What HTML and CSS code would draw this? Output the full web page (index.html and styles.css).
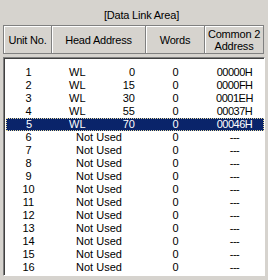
FILE: index.html
```
<!doctype html>
<html>
<head>
<meta charset="utf-8">
<title>Data Link Area</title>
<link rel="stylesheet" href="styles.css">
</head>

<body>
<div class="panel">
	<div class="title">[Data Link Area]</div>
	<div class="head">
		<div class="hc c1">Unit No.</div>
		<div class="hc c2">Head Address</div>
		<div class="hc c3">Words</div>
		<div class="hc c4">Common 2<br>Address</div>
	</div>
	<div class="list">
		<div class="row"><span class="c1">1</span><span class="c2 addr"><i>WL</i><b>0</b></span><span class="c3">0</span><span class="c4">00000H</span></div>
		<div class="row"><span class="c1">2</span><span class="c2 addr"><i>WL</i><b>15</b></span><span class="c3">0</span><span class="c4">0000FH</span></div>
		<div class="row"><span class="c1">3</span><span class="c2 addr"><i>WL</i><b>30</b></span><span class="c3">0</span><span class="c4">0001EH</span></div>
		<div class="row"><span class="c1">4</span><span class="c2 addr"><i>WL</i><b>55</b></span><span class="c3">0</span><span class="c4">00037H</span></div>
		<div class="row sel"><span class="c1">5</span><span class="c2 addr"><i>WL</i><b>70</b></span><span class="c3">0</span><span class="c4">00046H</span></div>
		<div class="row"><span class="c1">6</span><span class="c2">Not Used</span><span class="c3">0</span><span class="c4">---</span></div>
		<div class="row"><span class="c1">7</span><span class="c2">Not Used</span><span class="c3">0</span><span class="c4">---</span></div>
		<div class="row"><span class="c1">8</span><span class="c2">Not Used</span><span class="c3">0</span><span class="c4">---</span></div>
		<div class="row"><span class="c1">9</span><span class="c2">Not Used</span><span class="c3">0</span><span class="c4">---</span></div>
		<div class="row"><span class="c1">10</span><span class="c2">Not Used</span><span class="c3">0</span><span class="c4">---</span></div>
		<div class="row"><span class="c1">11</span><span class="c2">Not Used</span><span class="c3">0</span><span class="c4">---</span></div>
		<div class="row"><span class="c1">12</span><span class="c2">Not Used</span><span class="c3">0</span><span class="c4">---</span></div>
		<div class="row"><span class="c1">13</span><span class="c2">Not Used</span><span class="c3">0</span><span class="c4">---</span></div>
		<div class="row"><span class="c1">14</span><span class="c2">Not Used</span><span class="c3">0</span><span class="c4">---</span></div>
		<div class="row"><span class="c1">15</span><span class="c2">Not Used</span><span class="c3">0</span><span class="c4">---</span></div>
		<div class="row"><span class="c1">16</span><span class="c2">Not Used</span><span class="c3">0</span><span class="c4">---</span></div>
	</div>
</div>
</body>
</html>
```

FILE: styles.css
```
*{margin:0;padding:0;box-sizing:border-box;}
body{background:#d6d3ce;font:11px 'Liberation Sans',Arial,sans-serif;color:#000;}
.panel{width:268px;height:280px;padding:0 0 0 3px;}
.title{height:25px;line-height:30px;text-align:center;padding-left:12px;letter-spacing:-0.2px;}

/* column header strip */
.head{display:flex;height:29px;width:262px;}
.hc{display:flex;align-items:center;justify-content:center;text-align:center;line-height:12px;border:1px solid #808080;border-left:0;box-shadow:inset 1px 1px #fff;letter-spacing:-0.2px;}
.hc.c1{border-left:1px solid #808080;}
.c1{width:49px;}
.c2{width:94px;}
.c3{width:59px;}
.c4{width:59px;}

/* sunken list body */
.list{margin-top:3px;width:262px;height:219px;background:#fff;border-top:1px solid #808080;border-left:1px solid #808080;border-right:1px solid #fff;border-bottom:1px solid #fff;box-shadow:inset 1px 1px #404040;padding:8px 0 0 1px;}
.row{display:flex;height:13px;line-height:13px;}
.row span{text-align:center;white-space:nowrap;}
.row .c1{width:47px;}
.row .c4{letter-spacing:-0.5px;}
.addr{display:flex;justify-content:space-between;padding:0 11px 0 17px;}
.addr i,.addr b{font-style:normal;font-weight:normal;}
.sel{background:#0a246a;color:#fff;outline:1px dotted #e6dca0;outline-offset:-1px;margin-left:1px;width:258px;}
.sel .c1{width:46px;}
```
